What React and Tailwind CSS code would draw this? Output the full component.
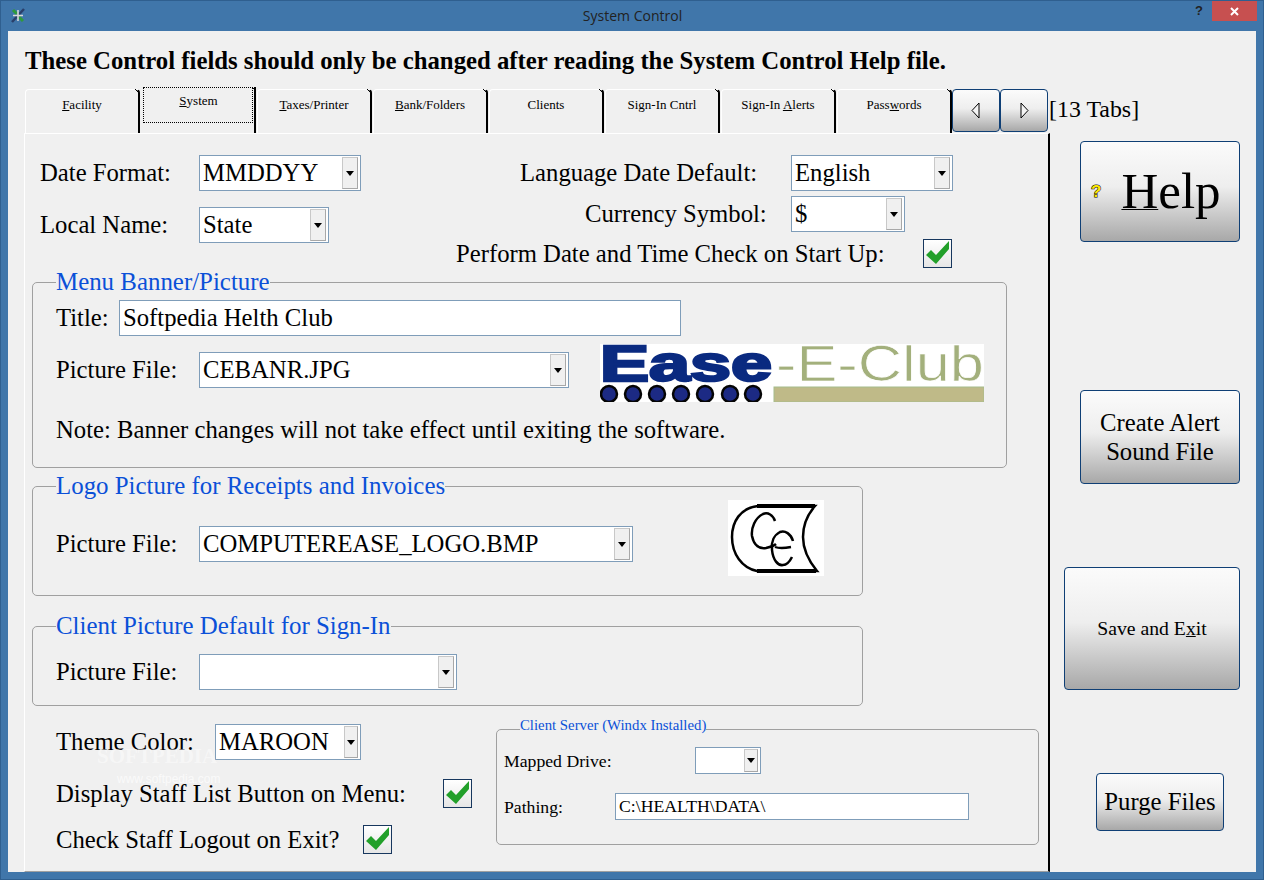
const tabs = [
  { w: "w-[115px]", label: <><u>F</u>acility</> },
  { w: "w-[115px]", label: <><u>S</u>ystem</>, active: true },
  { w: "w-[115px]", label: <><u>T</u>axes/Printer</> },
  { w: "w-[115px]", label: <><u>B</u>ank/Folders</> },
  { w: "w-[115px]", label: <>Clients</> },
  { w: "w-[115px]", label: <>Si<u>g</u>n-In Cntrl</> },
  { w: "w-[115px]", label: <>Sign-In <u>A</u>lerts</> },
  { w: "w-[115px]", label: <>Pass<u>w</u>ords</> },
];

const btnBg = "bg-[linear-gradient(to_bottom,#fbfbfb_0%,#eeeeee_45%,#a8a8a8_100%)]";

function WinIcon() {
  return (
    <svg width="16" height="17" viewBox="0 0 16 17">
      <path d="M2 15 L14 2" stroke="#2a3f6a" strokeWidth="2.5" />
      <path d="M3 3 L7 7 M9 10 L13 14" stroke="#2f9a3c" strokeWidth="3" />
      <path d="M8 3 V14 M3 8.5 H13" stroke="#d8d8d8" strokeWidth="1.6" />
    </svg>
  );
}

function Tab({ w, label, active }) {
  if (active) {
    return (
      <div className={`${w} h-[46px] -mt-[2px] relative border-r-2 border-black text-center pt-[6px] pl-[6px] pr-[4px] leading-[16px]`}>
        <div className="absolute left-[2px] top-0 w-[110px] h-[36px] border border-dotted border-black" />
        {label}
        <svg className="absolute -right-[2px] top-0" width="4" height="4"><path d="M0 0 L4 4" stroke="#000" /></svg>
      </div>
    );
  }
  return (
    <div className={`${w} h-[44px] relative border-l border-t border-white border-r-2 border-r-black rounded-t-[4px] text-center pt-[7px] leading-[16px]`}>
      {label}
      <svg className="absolute -right-[2px] -top-[1px]" width="5" height="5"><path d="M0 0 L5 5" stroke="#000" /></svg>
    </div>
  );
}

function Arrow({ dir }) {
  return (
    <div className={`w-[48px] h-[43px] border border-[#0f3f75] rounded-[4px] flex items-center justify-center ${btnBg}`}>
      <svg width="10" height="17" viewBox="0 0 10 17">
        {dir === "left"
          ? <polygon points="1,8.5 8,1 8,16" fill="#f4f4f4" stroke="#000" />
          : <polygon points="9,8.5 2,1 2,16" fill="#f4f4f4" stroke="#000" />}
      </svg>
    </div>
  );
}

function Select({ w, h = "h-[36px]", value, small }) {
  return (
    <div className={`${w} ${h} bg-white border border-[#7f9db9] flex items-center justify-between pl-[3px] pr-[2px] py-[1px] shrink-0 relative`}>
      <span className="whitespace-nowrap">{value}</span>
      <div className={`${small ? "w-[14px]" : "w-[16px]"} h-full bg-[#f0f0f0] border border-[#c8c8c8] border-r-[#a8a8a8] border-b-[#a8a8a8] flex items-center justify-center shrink-0`}>
        <svg width="8" height="5" viewBox="0 0 8 5"><polygon points="0,0 8,0 4,5" fill="#000" /></svg>
      </div>
    </div>
  );
}

function Check() {
  return (
    <div className="w-[29px] h-[29px] border border-[#17375e] bg-[linear-gradient(to_bottom,#ffffff,#e6e6e6)] shrink-0">
      <svg width="27" height="27" viewBox="0 0 27 27">
        <polygon points="2,15 7,10 12,15 25,1 25,9 12,24" fill="#22a02a" />
      </svg>
    </div>
  );
}

function Group({ w, h, legend, mt, children }) {
  return (
    <div className={`${w} ${h} ${mt} ml-[7px] relative border border-[#a0a0a0] rounded-[5px]`}>
      <div className="absolute left-[23px] -top-[15px] h-[28px] leading-[28px] bg-[#f0f0f0] text-[#0b50d8] text-[24.9px] whitespace-nowrap">{legend}</div>
      {children}
    </div>
  );
}

function EaseLogo() {
  const dots = [9, 33, 57, 81, 105, 130, 153];
  return (
    <svg width="384" height="58" viewBox="0 0 384 58" className="bg-white shrink-0 -mt-[8px]">
      <text x="0" y="37" fontFamily="Liberation Sans" fontWeight="700" fontSize="50" textLength="172" lengthAdjust="spacingAndGlyphs" fill="#0a2a80" stroke="#0a2a80" strokeWidth="2.5">Ease</text>
      <text x="176" y="37" fontFamily="Liberation Sans" fontSize="50" textLength="208" lengthAdjust="spacingAndGlyphs" fill="#a3b07c" stroke="#ffffff" strokeWidth="0.7">-E-Club</text>
      {dots.map((x) => <circle key={x} cx={x} cy="50" r="8" fill="#1c2a84" stroke="#050505" strokeWidth="2.5" />)}
      <rect x="174" y="43" width="210" height="15" fill="#bfba88" stroke="#a6bc8c" strokeWidth="1" />
    </svg>
  );
}

function CeLogo() {
  return (
    <svg width="96" height="76" viewBox="0 0 96 76" className="bg-white shrink-0 -mt-[26px]">
      <path d="M87 6 L30 6 C12 8 4 22 4 37 C4 54 14 68 29 71 L89 71 C80 60 75 48 75 37 C75 25 80 14 87 6 Z" fill="none" stroke="#000" strokeWidth="2.5" />
      <path d="M29 6 H87 M29 71 H88" stroke="#000" strokeWidth="4" />
      <path d="M47 21 C45 15 40 12 35 14 C27 18 23 28 24 36 C26 46 32 49 38 48 C42 47 46 46 48 44" fill="none" stroke="#000" strokeWidth="2.5" />
      <path d="M65 41 C63 34 57 30 52 32 C46 35 43 42 44 50 C45 60 50 66 55 65 C59 65 62 61 64 57" fill="none" stroke="#000" strokeWidth="2.5" />
      <path d="M47 47 C52 49 58 48 63 47" fill="none" stroke="#000" strokeWidth="2.4" />
    </svg>
  );
}

function Button({ className, children }) {
  return (
    <div className={`${className} border border-[#0f3f75] rounded-[4px] flex items-center justify-center text-center shrink-0 ${btnBg}`}>
      {children}
    </div>
  );
}

export default function App() {
  return (
    <div className="relative w-[1264px] h-[880px] overflow-hidden bg-[#4076aa] border border-[#2f5f8f] flex flex-col text-black font-['Liberation_Serif',serif] text-[24.7px] leading-[28px]">
      <div className="h-[30px] flex items-start shrink-0 pl-[9px]">
        <div className="mt-[6px]"><WinIcon /></div>
        <div className="flex-1 text-center font-['Open_Sans',sans-serif] text-[14px] leading-[30px] text-[#222] pl-[44px]">System Control</div>
        <div className="font-['Liberation_Sans',sans-serif] font-bold text-[13px] leading-[20px] text-[#222] mr-[9px]">?</div>
        <div className="w-[45px] h-[20px] mr-[6px] bg-[#c75050] flex items-center justify-center">
          <svg width="9" height="9" viewBox="0 0 9 9"><path d="M1 1 L8 8 M8 1 L1 8" stroke="#fff" strokeWidth="2" /></svg>
        </div>
      </div>

      <div className="flex-1 mx-[7px] mb-[7px] bg-[#f0f0f0] flex flex-col min-h-0">
        <h1 className="h-[58px] shrink-0 pl-[17px] pt-[16px] leading-[28px] font-bold text-[24.75px] whitespace-nowrap">
          These Control fields should only be changed after reading the System Control Help file.
        </h1>

        <div className="h-[44px] shrink-0 flex pl-[17px]">
          <div className="flex gap-[1px] text-[13px]">
            {tabs.map((t, i) => <Tab key={i} {...t} />)}
          </div>
          <div className="flex">
            <Arrow dir="left" />
            <Arrow dir="right" />
          </div>
          <div className="ml-[1px] -mt-[2px] leading-[44px] whitespace-nowrap text-[23.9px]">[13 Tabs]</div>
        </div>

        <div className="flex-1 flex min-h-0">
          <div className="w-[1026px] ml-[16px] border-l border-t border-l-white border-t-white border-b border-b-[#a0a0a0] border-r-2 border-r-black shrink-0">
            <div className="flex h-[134px]">
              <div className="w-[431px] pl-[15px] pt-[21px]">
                <div className="flex items-center">
                  <div className="w-[159px]">Date Format:</div>
                  <Select w="w-[162px]" value="MMDDYY" />
                </div>
                <div className="flex items-center mt-[16px]">
                  <div className="w-[159px]">Local Name:</div>
                  <Select w="w-[130px]" value="State" />
                </div>
              </div>
              <div className="pt-[21px]">
                <div className="flex items-center pl-[64px]">
                  <div className="w-[271px]">Language Date Default:</div>
                  <Select w="w-[162px]" value="English" />
                </div>
                <div className="flex items-center mt-[5px] pl-[129px]">
                  <div className="w-[206px]">Currency Symbol:</div>
                  <Select w="w-[114px]" value="$" />
                </div>
                <div className="flex items-center mt-[7px]">
                  <div className="w-[467px] whitespace-nowrap">Perform Date and Time Check on Start Up:</div>
                  <Check />
                </div>
              </div>
            </div>

            <Group w="w-[975px]" h="h-[186px]" mt="mt-[14px]" legend="Menu Banner/Picture">
              <div className="pl-[23px] pt-[17px]">
                <div className="flex items-center">
                  <div className="w-[63px]">Title:</div>
                  <div className="w-[562px] h-[36px] bg-white border border-[#7f9db9] pl-[3px] leading-[34px]">Softpedia Helth Club</div>
                </div>
                <div className="flex items-start mt-[16px]">
                  <div className="w-[143px] leading-[36px]">Picture File:</div>
                  <Select w="w-[370px]" value="CEBANR.JPG" />
                  <div className="ml-[31px] flex"><EaseLogo /></div>
                </div>
                <div className="mt-[14px] leading-[28px] whitespace-nowrap">Note: Banner changes will not take effect until exiting the software.</div>
              </div>
            </Group>

            <Group w="w-[831px]" h="h-[110px]" mt="mt-[18px]" legend="Logo Picture for Receipts and Invoices">
              <div className="pl-[23px] pt-[39px] flex items-start">
                <div className="w-[143px] leading-[36px]">Picture File:</div>
                <Select w="w-[434px]" value="COMPUTEREASE_LOGO.BMP" />
                <div className="ml-[95px] flex"><CeLogo /></div>
              </div>
            </Group>

            <Group w="w-[831px]" h="h-[80px]" mt="mt-[30px]" legend="Client Picture Default for Sign-In">
              <div className="pl-[23px] pt-[27px] flex items-center">
                <div className="w-[143px]">Picture File:</div>
                <Select w="w-[258px]" value="" />
              </div>
            </Group>

            <div className="flex">
              <div className="w-[471px] pl-[31px] pt-[18px] shrink-0">
                <div className="flex items-center">
                  <div className="w-[159px] whitespace-nowrap">Theme Color:</div>
                  <Select w="w-[146px]" value="MAROON" small />
                </div>
                <div className="flex items-center mt-[19px]">
                  <div className="w-[387px] whitespace-nowrap">Display Staff List Button on Menu:</div>
                  <Check />
                </div>
                <div className="flex items-center mt-[17px]">
                  <div className="w-[307px] whitespace-nowrap">Check Staff Logout on Exit?</div>
                  <Check />
                </div>
              </div>
              <div className="mt-[23px] w-[543px] h-[116px] relative border border-[#a0a0a0] rounded-[5px] text-[17.7px] leading-[22px]">
                <div className="absolute left-[23px] -top-[15px] h-[20px] leading-[20px] bg-[#f0f0f0] text-[#0b50d8] whitespace-nowrap text-[14.8px]">Client Server (Windx Installed)</div>
                <div className="pl-[7px] pt-[17px]">
                  <div className="flex items-center">
                    <div className="w-[191px]">Mapped Drive:</div>
                    <Select w="w-[66px]" h="h-[27px]" value="" small />
                  </div>
                  <div className="flex items-center mt-[19px]">
                    <div className="w-[111px]">Pathing:</div>
                    <div className="w-[354px] h-[27px] bg-white border border-[#7f9db9] pl-[3px] leading-[25px]">C:\HEALTH\DATA\</div>
                  </div>
                </div>
              </div>
            </div>
          </div>

          <div className="flex-1 flex flex-col items-start pt-[8px] pl-[30px]">
            <Button className="w-[160px] h-[101px] relative">
              <svg className="absolute left-[8px] top-[38px]" width="14" height="20" viewBox="0 0 14 20">
                <text x="2" y="17" fontFamily="Liberation Sans" fontWeight="700" fontSize="17" fill="#ffe800" stroke="#000" strokeWidth="1" paintOrder="stroke">?</text>
              </svg>
              <span className="text-[51px] leading-none pl-[22px]"><u className="decoration-1">H</u>elp</span>
            </Button>
            <Button className="w-[160px] h-[94px] mt-[148px] leading-[29px]">
              <span>Create Alert<br />Sound File</span>
            </Button>
            <Button className="w-[176px] h-[123px] mt-[83px] -ml-[16px] text-[19.7px] pb-[2px]">
              <span>Save and E<u>x</u>it</span>
            </Button>
            <Button className="w-[128px] h-[58px] mt-[83px] ml-[16px]">
              <span>Purge Files</span>
            </Button>
          </div>
        </div>
      </div>

      <div className="absolute left-[96px] top-[743px] text-[21px] font-bold leading-[24px] text-white/45 pointer-events-none whitespace-nowrap">SOFTPEDIA</div>
      <div className="absolute left-[116px] top-[771px] text-[12px] leading-[14px] text-white/70 pointer-events-none font-['Liberation_Sans',sans-serif] whitespace-nowrap">www.softpedia.com</div>
    </div>
  );
}
